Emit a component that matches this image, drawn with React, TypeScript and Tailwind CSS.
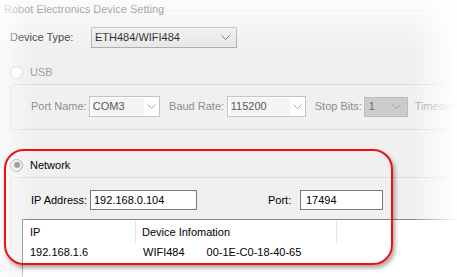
import React from "react";

const Chevron = ({ color }: { color: string }) => (
  <svg width="9" height="5" viewBox="0 0 9 5" className="block">
    <path d="M0.5 0.5 L4.5 4.5 L8.5 0.5" fill="none" stroke={color} strokeWidth="1" />
  </svg>
);

export default function App() {
  return (
    <div
      className="relative w-[457px] h-[277px] overflow-hidden bg-[#f0f0f0] text-[11px] leading-none text-black"
      style={{ fontFamily: '"Liberation Sans", Arial, sans-serif' }}
    >
      {/* Title */}
      <div className="flex items-center h-[18px] pl-[4px]">
        <span className="whitespace-nowrap text-[#000]">Robot Electronics Device Setting</span>
        <div className="flex-1 h-px bg-[#dcdcdc] ml-[3px] mt-[2px]" />
      </div>

      {/* Device type */}
      <div className="flex items-center mt-[9px] h-[21px] pl-[10px]">
        <span className="w-[81px] text-[#222]">Device Type:</span>
        <div className="flex items-center justify-between w-[146px] h-[21px] border border-[#adadad] bg-[#e8e8e8] pl-[3px] pr-[6px]">
          <span>ETH484/WIFI484</span>
          <Chevron color="#606060" />
        </div>
      </div>

      {/* USB radio */}
      <div className="flex items-center mt-[17px] h-[14px] pl-[10px]">
        <div className="w-[13px] h-[13px] rounded-full border border-[#cccccc] bg-white" />
        <span className="ml-[7px] text-[#a0a0a0]">USB</span>
      </div>

      {/* USB group */}
      <div className="mt-[5px] ml-[10px] h-[46px] border-t border-l border-b border-[#dcdcdc] rounded-tl-[3px] rounded-bl-[3px] pt-[11px]">
        <div className="flex items-center h-[21px] pl-[20px] text-[#8d8d8d] whitespace-nowrap">
          <span className="w-[60px]">Port Name:</span>
          <div className="flex items-center w-[74px] h-[21px] border border-[#c4c4c4] bg-white">
            <div className="flex items-center h-[17px] w-[52px] ml-[2px] bg-[#f4f4f4] text-[#5a5a5a] pl-[1px]">COM3</div>
            <div className="flex-1 flex justify-center"><Chevron color="#a8a8a8" /></div>
          </div>
          <span className="ml-[9px] w-[60px]">Baud Rate:</span>
          <div className="flex items-center w-[82px] h-[21px] border border-[#c4c4c4] bg-white">
            <div className="flex items-center h-[17px] w-[60px] ml-[2px] bg-[#f4f4f4] text-[#5a5a5a] pl-[1px]">115200</div>
            <div className="flex-1 flex justify-center"><Chevron color="#a8a8a8" /></div>
          </div>
          <span className="ml-[9px] w-[51px]">Stop Bits:</span>
          <div className="flex items-center justify-between w-[45px] h-[20px] border border-[#bcbcbc] bg-[#cccccc] pl-[4px] pr-[6px] text-[#6d6d6d]">
            <span>1</span>
            <Chevron color="#9a9a9a" />
          </div>
          <span className="ml-[7px] text-[#a0a0a0]">Timeout:</span>
        </div>
      </div>

      {/* Network radio */}
      <div className="flex items-center mt-[28px] h-[14px] pl-[10px]">
        <div className="flex items-center justify-center w-[13px] h-[13px] rounded-full border border-[#9a9a9a] bg-[#eeeeee]">
          <div className="w-[6px] h-[6px] rounded-full bg-[#7a7a7a]" />
        </div>
        <span className="ml-[7px]">Network</span>
      </div>

      {/* Network group */}
      <div className="mt-[5px] ml-[10px] h-[100px] border-t border-l border-[#dcdcdc] rounded-tl-[3px] pt-[12px] flex flex-col">
        <div className="flex items-center h-[20px] pl-[20px] whitespace-nowrap">
          <span className="w-[59px]">IP Address:</span>
          <div className="flex items-center w-[107px] h-[20px] border border-[#7a7a7a] bg-white pl-[3px]">192.168.0.104</div>
          <span className="ml-[71px] w-[32px]">Port:</span>
          <div className="flex items-center w-[83px] h-[20px] border border-[#7a7a7a] bg-white pl-[5px]">17494</div>
        </div>
        <div className="mt-[9px] ml-[11px] flex-1 border-t border-l border-[#828790] bg-white">
          <div className="flex items-center h-[24px] whitespace-nowrap">
            <div className="flex items-center w-[113px] h-[23px] pl-[7px] border-r border-[#e5e5e5]">IP</div>
            <div className="flex items-center w-[201px] h-[23px] pl-[6px] border-r border-[#e5e5e5]">Device Infomation</div>
          </div>
          <div className="flex items-center h-[17px] whitespace-nowrap">
            <div className="w-[114px] pl-[7px]">192.168.1.6</div>
            <div className="pl-[6px]">WIFI484</div>
            <div className="ml-[22px]">00-1E-C0-18-40-65</div>
          </div>
        </div>
      </div>

      {/* Fade overlays */}
      <div className="pointer-events-none absolute left-0 top-0 w-full h-[48px] bg-gradient-to-b from-[rgba(255,255,255,0.8)] to-[rgba(255,255,255,0)]" />
      <div className="pointer-events-none absolute left-0 top-0 h-full w-[30px] bg-gradient-to-r from-[rgba(255,255,255,0.7)] to-[rgba(255,255,255,0)]" />
      <div className="pointer-events-none absolute right-0 top-0 h-full w-[46px] bg-gradient-to-l from-[rgba(255,255,255,1)] to-[rgba(255,255,255,0)]" />
      <div className="pointer-events-none absolute left-0 bottom-0 w-full h-[12px] bg-gradient-to-t from-[rgba(255,255,255,0.6)] to-[rgba(255,255,255,0)]" />

      {/* Red annotation */}
      <div className="pointer-events-none absolute left-[4px] top-[149px] w-[389px] h-[116px] rounded-[20px] border-[2px] border-[#f01010] shadow-[2px_3px_4px_rgba(0,0,0,0.35)]" />
    </div>
  );
}
